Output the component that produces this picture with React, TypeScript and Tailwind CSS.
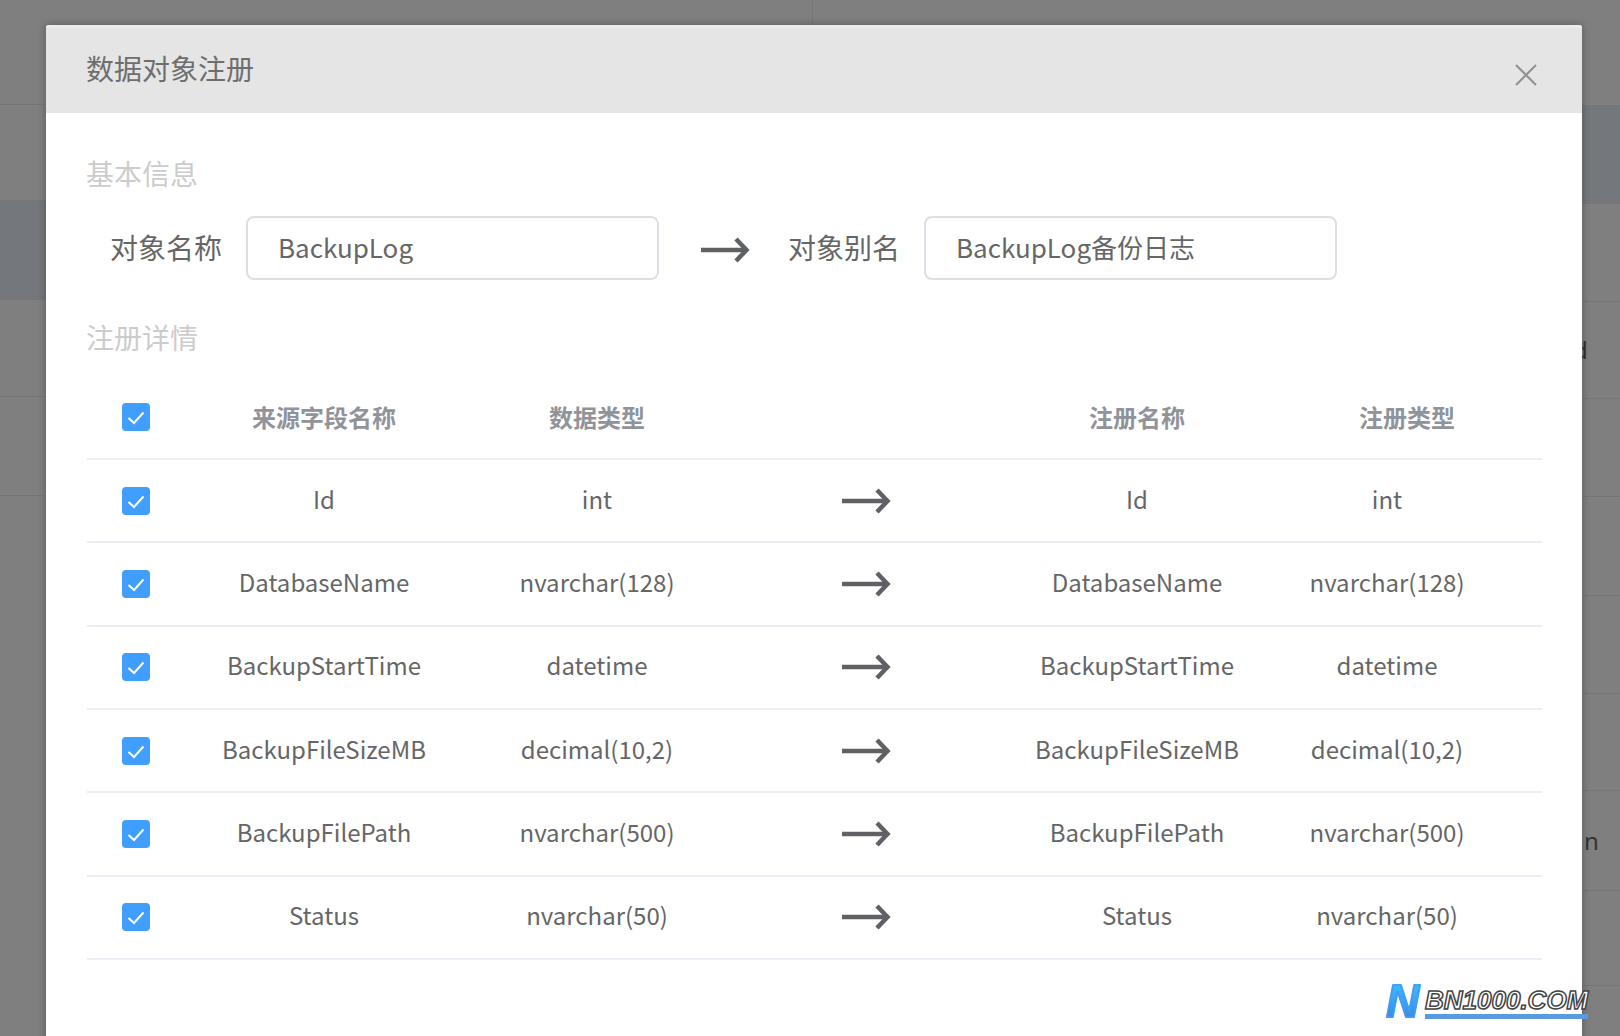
const FONT = "font-['Noto_Sans_CJK_SC','Noto_Sans',sans-serif]";

const rows = [
  ["Id", "int"],
  ["DatabaseName", "nvarchar(128)"],
  ["BackupStartTime", "datetime"],
  ["BackupFileSizeMB", "decimal(10,2)"],
  ["BackupFilePath", "nvarchar(500)"],
  ["Status", "nvarchar(50)"],
];

function Check() {
  return (
    <span className="flex h-[28px] w-[28px] items-center justify-center rounded-[4px] bg-[#409eff]">
      <svg width="28" height="28" viewBox="0 0 28 28" fill="none">
        <path d="M6.5 15 L12 20 L21.5 9.5" stroke="#ffffff" strokeWidth="2" />
      </svg>
    </span>
  );
}

function Arrow() {
  return (
    <svg width="50" height="28" viewBox="0 0 50 28" fill="none">
      <path d="M1 14 H46" stroke="#5f6165" strokeWidth="4.5" />
      <path d="M36 3 L46.5 14 L36 25" stroke="#5f6165" strokeWidth="4.5" />
    </svg>
  );
}

function Field({ label, value, labelClass }: { label: string; value: string; labelClass: string }) {
  return (
    <div className="flex items-center">
      <span className={`pb-[2px] text-[28px] leading-[40px] text-[#666666] ${labelClass}`}>{label}</span>
      <div className="flex h-[64px] w-[413px] items-center rounded-[8px] border-2 border-[#dcdfe6] bg-white pb-[2px] pl-[30px] text-[26px] leading-[38px] text-[#666666]">
        {value}
      </div>
    </div>
  );
}

const grid = "grid grid-cols-[97px_280px_266px_272px_270px_270px] items-center border-b-2 border-[#ebeef5]";

export default function App() {
  return (
    <div className={`relative flex h-[1036px] w-[1620px] overflow-hidden bg-[#7f7f7f] ${FONT}`}>
      {/* page behind the overlay, left */}
      <div className="flex w-[46px] shrink-0 flex-col">
        <div className="h-[105px] border-b border-[#767676]" />
        <div className="h-[96px] border-b border-[#767676]" />
        <div className="h-[99px] bg-[#74777b]" />
        <div className="h-[97px] border-b border-[#767676]" />
        <div className="h-[99px] border-b border-[#767676]" />
      </div>

      {/* dialog */}
      <div className="relative z-10 mt-[25px] flex h-[1040px] w-[1536px] shrink-0 flex-col rounded-t-[3px] bg-white shadow-[0_0_8px_rgba(0,0,0,0.3)]">
        <div className="flex h-[88px] shrink-0 items-start justify-between rounded-t-[3px] border-t-[3px] border-[#ebebeb] bg-[#e5e5e5] pl-[40px] pr-[45px]">
          <span className="mt-[20px] text-[28px] leading-[40px] text-[#6e6e6e]">数据对象注册</span>
          <svg className="mt-[36px]" width="22" height="22" viewBox="0 0 22 22" fill="none">
            <path d="M1 1 L21 21 M21 1 L1 21" stroke="#8f9195" strokeWidth="2" />
          </svg>
        </div>

        <div className="flex flex-col pl-[40px] pr-[40px]">
          <div className="mt-[40px] text-[28px] leading-[40px] text-[#cccccc]">基本信息</div>

          <div className="mt-[23px] flex items-center">
            <Field label="对象名称" value="BackupLog" labelClass="ml-[24px] w-[136px]" />
            <span className="ml-[41px] mr-[38px] mt-[3px] flex">
              <Arrow />
            </span>
            <Field label="对象别名" value="BackupLog备份日志" labelClass="w-[136px]" />
          </div>

          <div className="mt-[37px] text-[28px] leading-[40px] text-[#cccccc]">注册详情</div>

          <div className="ml-[1px] mt-[19px] flex flex-col text-center">
            <div className={`${grid} h-[84px] text-[24px] font-bold leading-[34px] text-[#909399]`}>
              <span className="flex justify-center">
                <Check />
              </span>
              <span>来源字段名称</span>
              <span>数据类型</span>
              <span />
              <span>注册名称</span>
              <span>注册类型</span>
            </div>
            {rows.map(([name, type]) => (
              <div key={name} className={`${grid} h-[83.35px] text-[24px] leading-[36px] text-[#666666]`}>
                <span className="flex justify-center">
                  <Check />
                </span>
                <span className="pb-[4px]">{name}</span>
                <span className="pb-[4px]">{type}</span>
                <span className="flex justify-center">
                  <Arrow />
                </span>
                <span className="pb-[4px]">{name}</span>
                <span className="pb-[4px] pr-[40px]">{type}</span>
              </div>
            ))}
          </div>
        </div>
      </div>

      {/* page behind the overlay, right */}
      <div className="flex min-w-0 flex-1 flex-col">
        <div className="h-[105px]" />
        <div className="h-[99px] bg-[#74777b]" />
        {[
          ["h-[98px]", ""],
          ["h-[96.5px]", "d"],
          ["h-[98.5px]", ""],
          ["h-[98.5px]", ""],
          ["h-[98.5px]", ""],
          ["h-[97px]", ""],
          ["h-[100px]", "n"],
          ["h-[95px]", ""],
        ].map(([h, ch], i) => (
          <div
            key={i}
            className={`${h} flex items-center border-b border-[#767676] font-['Noto_Sans',sans-serif] text-[24px] leading-[30px] text-[#333333]`}
          >
            {ch === "d" && <span className="-ml-[9px]">d</span>}
            {ch === "n" && <span className="ml-[2px]">n</span>}
          </div>
        ))}
      </div>

      {/* vertical rule of the page behind, top edge */}
      <div className="absolute left-[812px] top-0 h-[25px] w-px bg-[#767676]" />

      {/* watermark */}
      <div className="absolute left-[1386px] top-[978px] z-20 flex items-end">
        <span className="w-[39px] bg-gradient-to-b from-[#3fc3ff] to-[#3d7fe8] bg-clip-text font-['Liberation_Sans',sans-serif] text-[46px] font-bold italic leading-[46px] text-transparent [-webkit-text-stroke:1.5px_#3d9df5]">
          N
        </span>
        <span className="flex flex-col">
          <span className="font-['Liberation_Sans',sans-serif] text-[26px] font-bold italic leading-[28px] text-white [-webkit-text-stroke:1.5px_#444444]">
            BN1000.COM
          </span>
          <span className="mb-[5px] h-[5px] w-[163px] bg-[#5a9be0]" />
        </span>
      </div>
    </div>
  );
}
